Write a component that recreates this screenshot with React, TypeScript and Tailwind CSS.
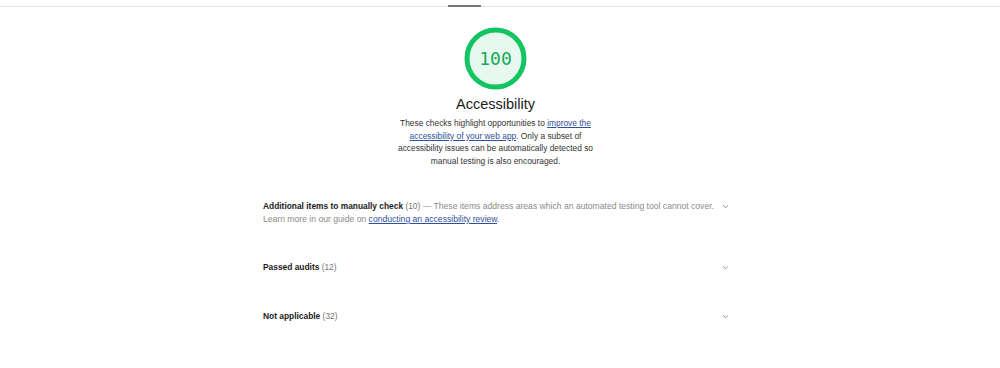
export default function App() {
    const rows = [
        { title: "Passed audits", count: 12 },
        { title: "Not applicable", count: 32 },
    ];

    return (
        <div className="w-[1000px] h-[368px] bg-white overflow-hidden font-['Liberation_Sans',Arial,sans-serif] text-[#212121]">

            {/* TOP TAB LINE */}
            <div className="h-[7px] pt-[5px] border-b border-[#e2e2e2]">
                <div className="ml-[448px] w-[33px] h-[2px] bg-[#767676]" />
            </div>

            {/* SCORE HEADER */}
            <div className="flex flex-col items-center pr-[9px]">
                <div className="mt-[20px] relative w-[63px] h-[63px] flex items-center justify-center">
                    <svg width="63" height="63" viewBox="0 0 63 63" className="absolute inset-0">
                        <circle cx="31.5" cy="31.5" r="28.5" fill="#e7f9ee" stroke="#12c462" strokeWidth="5" />
                    </svg>
                    <span className="relative font-['DejaVu_Sans_Mono','Liberation_Mono',monospace] text-[18px] leading-none text-[#18a85c]">
                        100
                    </span>
                </div>
                <div className="mt-[6px] text-[14.5px] leading-[17px] text-[#212121]">Accessibility</div>
                <p className="mt-[4px] text-center text-[8.4px] leading-[12.7px] text-[#333]">
                    These checks highlight opportunities to{" "}
                    <a className="text-[#2e4f9c] underline">improve the</a>
                    <br />
                    <a className="text-[#2e4f9c] underline">accessibility of your web app</a>. Only a subset of
                    <br />
                    accessibility issues can be automatically detected so
                    <br />
                    manual testing is also encouraged.
                </p>
            </div>

            {/* AUDIT GROUPS */}
            <div className="ml-[263px] w-[466px] mt-[32.6px] text-[8.4px] leading-[12.6px]">
                <div className="flex items-start justify-between">
                    <div className="w-[458px]">
                        <span className="font-bold text-[#212121]">Additional items to manually check</span>{" "}
                        <span className="text-[#757575]">(10)</span>
                        <span className="text-[#8a8a8a] text-[8.6px]">
                            {" "}— These items address areas which an automated testing tool cannot cover. Learn more in our guide on{" "}
                            <a className="text-[#2e4f9c] underline">conducting an accessibility review</a>.
                        </span>
                    </div>
                    <Chevron />
                </div>

                {rows.map((r, i) => (
                    <div key={r.title} className={`flex items-center justify-between ${i === 0 ? "mt-[35.4px]" : "mt-[36.4px]"}`}>
                        <div>
                            <span className="font-bold text-[#212121]">{r.title}</span>{" "}
                            <span className="text-[#757575]">({r.count})</span>
                        </div>
                        <Chevron />
                    </div>
                ))}
            </div>

        </div>
    );
}

function Chevron() {
    return (
        <svg width="7" height="12.6" viewBox="0 0 7 12.6" className="shrink-0">
            <path d="M1 5.3 L3.5 7.8 L6 5.3" fill="none" stroke="#8f8f8f" strokeWidth="1" />
        </svg>
    );
}
